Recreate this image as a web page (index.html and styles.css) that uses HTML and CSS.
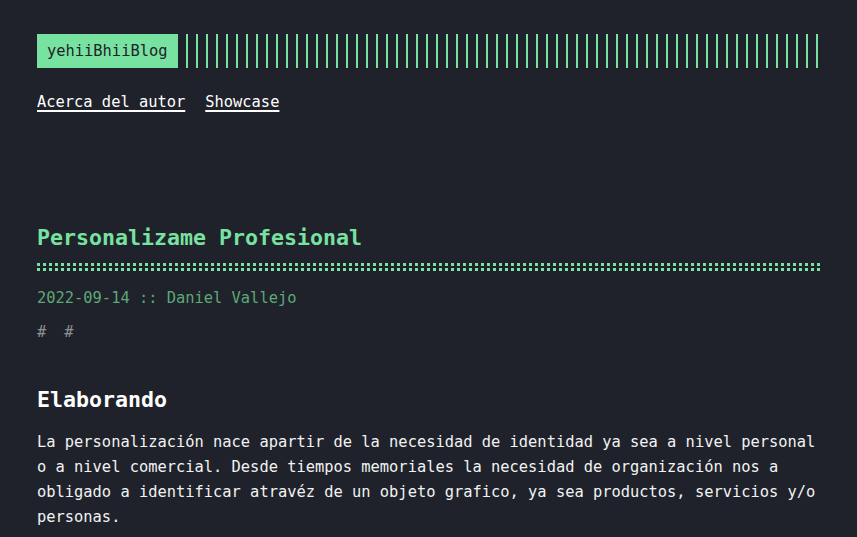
FILE: index.html
```html
<!DOCTYPE html>
<html lang="es">
<head>
<meta charset="utf-8">
<title>Personalizame Profesional :: yehiiBhiiBlog</title>
<link rel="stylesheet" href="styles.css">
</head>
<body>
<div class="container">
  <header class="header">
    <div class="header-top">
      <a class="logo" href="#">yehiiBhiiBlog</a>
      <div class="logo-lines"></div>
    </div>
    <nav class="menu">
      <a href="#">Acerca del autor</a>
      <a href="#">Showcase</a>
    </nav>
  </header>
  <main class="post">
    <h1 class="post-title">Personalizame Profesional</h1>
    <div class="post-meta">2022-09-14 :: Daniel Vallejo</div>
    <div class="post-tags"><a href="#">#</a><a href="#">#</a></div>
    <h2 class="section-title">Elaborando</h2>
    <p class="post-text">La personalización nace apartir de la necesidad de identidad ya sea a nivel personal o a nivel comercial. Desde tiempos memoriales la necesidad de organización nos a obligado a identificar atravéz de un objeto grafico, ya sea productos, servicios y/o personas.</p>
  </main>
</div>
</body>
</html>
```
FILE: styles.css
```css
html, body {
  margin: 0;
  padding: 0;
}
body {
  background: #1f222a;
  color: #f2f2f2;
  font-family: "DejaVu Sans Mono", "Liberation Mono", monospace;
  font-size: 15.4px;
  line-height: 25px;
}
.container {
  padding: 34px 37px 0 37px;
}
.header-top {
  display: flex;
  height: 34px;
}
.logo {
  display: block;
  background: #78e2a0;
  color: #1f222a;
  text-decoration: none;
  padding: 0 11px 0 10px;
  line-height: 34px;
}
.logo-lines {
  flex: 1;
  margin-left: 8px;
  background: repeating-linear-gradient(90deg, #78e2a0 0, #78e2a0 2px, transparent 2px, transparent 10px);
}
.menu {
  display: flex;
  gap: 20px;
  margin-top: 22px;
}
.menu a {
  color: #ffffff;
  text-decoration: underline;
  text-decoration-thickness: 1.5px;
  text-underline-offset: 3px;
}
.post-title {
  position: relative;
  margin: 108px 0 0 0;
  color: #78e2a0;
  font-size: 21.6px;
  line-height: 30px;
  font-weight: bold;
  padding-bottom: 10px;
  border-bottom: 3px dotted #78e2a0;
}
.post-title::after {
  content: "";
  position: absolute;
  left: 0;
  right: 0;
  bottom: -8px;
  border-bottom: 3px dotted #78e2a0;
}
.post-meta {
  margin-top: 20px;
  color: #5ca877;
}
.post-tags {
  display: flex;
  gap: 18px;
  margin-top: 9px;
}
.post-tags a {
  color: #8e9096;
  text-decoration: none;
}
.section-title {
  margin: 40px 0 0 0;
  color: #ffffff;
  font-size: 21.6px;
  line-height: 30px;
  font-weight: bold;
}
.post-text {
  margin: 15px 0 0 0;
}
```
